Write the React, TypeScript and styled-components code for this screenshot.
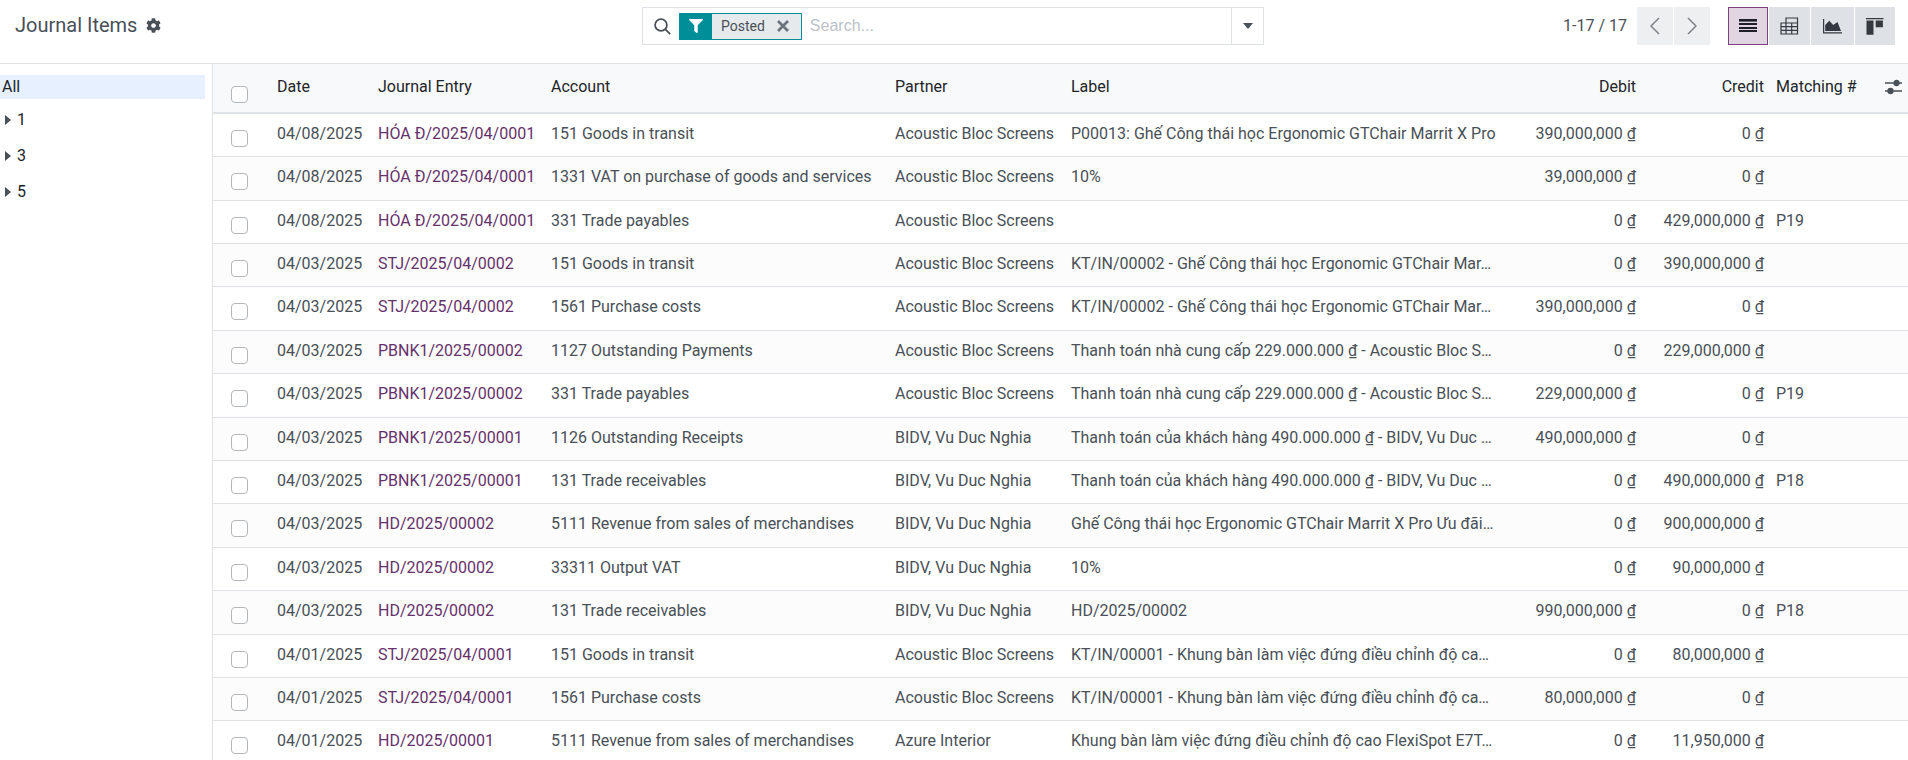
import React from "react";
import styled, { createGlobalStyle } from "styled-components";
import { FaCog, FaFilter } from "react-icons/fa";

const GlobalStyle = createGlobalStyle`
  * { box-sizing: border-box; }
  body {
    margin: 0;
    background: #fff;
    color: #495057;
    font-family: Roboto, "Noto Sans", sans-serif;
    font-size: 16px;
    line-height: 24px;
  }
  button, input { font: inherit; color: inherit; }
  svg { display: block; flex: none; }
`;

const Page = styled.div`
  display: flex;
  flex-direction: column;
  height: 100vh;
  overflow: hidden;
`;

const ControlPanel = styled.header`
  display: grid;
  grid-template-columns: 1fr minmax(320px, 622px) 1fr;
  align-items: start;
  gap: 16px;
  padding: 7px 13px 18px 11px;
  border-bottom: 1px solid #dee2e6;
`;

const Breadcrumb = styled.div`
  display: flex;
  align-items: center;
  gap: 9px;
  height: 36px;
  padding-left: 4px;
`;

const Title = styled.h1`
  margin: 0;
  font-size: 20px;
  font-weight: 400;
`;

const IconButton = styled.button`
  display: inline-flex;
  align-items: center;
  justify-content: center;
  padding: 0;
  border: 0;
  background: none;
  cursor: pointer;
`;

const SearchBar = styled.div`
  display: flex;
  align-items: stretch;
  height: 38px;
  border: 1px solid #dee2e6;
`;

const SearchBody = styled.div`
  display: flex;
  flex: 1;
  align-items: center;
  gap: 8px;
  min-width: 0;
  padding: 0 11px;
`;

const Facet = styled.div`
  display: flex;
  align-items: stretch;
  height: 27px;
  border: 1px solid #008f99;
  background: #e7eaed;
  font-size: 14px;
`;

const FacetIcon = styled.span`
  display: flex;
  align-items: center;
  justify-content: center;
  width: 32px;
  background: #008f99;
  color: #fff;
`;

const FacetLabel = styled.span`
  display: flex;
  align-items: center;
  gap: 12px;
  padding: 0 12px 0 9px;
`;

const SearchInput = styled.input`
  flex: 1;
  min-width: 0;
  padding: 0;
  border: 0;
  outline: 0;
  background: none;
  font-family: "Liberation Sans", sans-serif;
  &::placeholder { color: #bcc3ca; opacity: 1; }
`;

const SearchToggle = styled(IconButton)`
  width: 32px;
  border-left: 1px solid #dee2e6;
`;

const Navigation = styled.div`
  display: flex;
  align-items: center;
  justify-content: flex-end;
`;

const Range = styled.span`
  margin-right: 10px;
`;

const ButtonGroup = styled.div`
  display: flex;
  gap: 1px;
  & + & { margin-left: 18px; }
`;

const PagerButton = styled(IconButton)`
  width: 36px;
  height: 38px;
  background: #eeeff1;
  color: #7c8186;
`;

const ViewButton = styled(IconButton)<{ $active?: boolean }>`
  height: 38px;
  padding: 0 10px;
  border: 1px solid ${(p) => (p.$active ? "#7c3f7c" : "#dee2e6")};
  background: ${(p) => (p.$active ? "#e2d5e2" : "#dee2e6")};
  color: ${(p) => (p.$active ? "#1d1f24" : "#343a40")};
`;

const Content = styled.div`
  display: flex;
  flex: 1;
  min-height: 0;
`;

const Sidebar = styled.nav`
  flex: 0 0 213px;
  padding: 11px 7px 0 0;
  border-right: 1px solid #dee2e6;
  color: #212529;
`;

const CategoryList = styled.ul`
  margin: 0;
  padding: 0;
  list-style: none;
`;

const Category = styled.button<{ $active?: boolean }>`
  display: flex;
  align-items: center;
  gap: 6px;
  width: 100%;
  height: ${(p) => (p.$active ? "24px" : "36px")};
  margin-bottom: ${(p) => (p.$active ? "3px" : "0")};
  padding: 0 0 0 ${(p) => (p.$active ? "2px" : "5px")};
  border: 0;
  background: ${(p) => (p.$active ? "#e6f0ff" : "none")};
  text-align: left;
  cursor: pointer;
`;

const TableScroll = styled.main`
  flex: 1;
  min-width: 0;
  overflow: auto;
  scrollbar-width: none;
`;

const Table = styled.table`
  width: 100%;
  min-width: 1400px;
  table-layout: fixed;
  border-collapse: separate;
  border-spacing: 0;
`;

const Column = styled.col<{ $width?: number }>`
  width: ${(p) => (p.$width ? `${p.$width}px` : "auto")};
`;

const HeadCell = styled.th<{ $end?: boolean }>`
  height: 50px;
  padding: 11px 6px 0;
  border-bottom: 2px solid #dee2e6;
  background: #f8f9fa;
  color: #212529;
  font-weight: 400;
  text-align: ${(p) => (p.$end ? "right" : "left")};
  vertical-align: top;
  white-space: nowrap;
  &:first-child, &:last-child { padding-top: 14px; }
`;

const Row = styled.tr`
  height: 43px;
  &:nth-child(5n), &:nth-child(5n + 2) { height: 44px; }
  &:nth-child(even) { background: #fcfcfc; }
`;

const Cell = styled.td<{ $end?: boolean }>`
  padding: 8px 6px 0;
  border-bottom: 1px solid #dee2e6;
  overflow: hidden;
  text-align: ${(p) => (p.$end ? "right" : "left")};
  text-overflow: ellipsis;
  vertical-align: top;
  white-space: nowrap;
`;

const EntryLink = styled.a`
  color: #66316b;
  text-decoration: none;
`;

const Checkbox = styled.input`
  display: block;
  appearance: none;
  width: 17px;
  height: 17px;
  margin: 8px 0 0 12px;
  border: 1px solid #b4b7ba;
  border-radius: 4px;
  background: #fff;
  &:checked { background: #714b67; }
`;

type Item = [string, string, string, string, string, string, string, string];

const ABS = "Acoustic Bloc Screens";
const BIDV = "BIDV, Vu Duc Nghia";
const CHAIR = "KT/IN/00002 - Ghế Công thái học Ergonomic GTChair Mar…";
const SUPPLIER = "Thanh toán nhà cung cấp 229.000.000 ₫ - Acoustic Bloc S…";
const CUSTOMER = "Thanh toán của khách hàng 490.000.000 ₫ - BIDV, Vu Duc …";
const DESK = "KT/IN/00001 - Khung bàn làm việc đứng điều chỉnh độ ca…";

const items: Item[] = [
  ["04/08/2025", "HÓA Đ/2025/04/0001", "151 Goods in transit", ABS, "P00013: Ghế Công thái học Ergonomic GTChair Marrit X Pro", "390,000,000", "0", ""],
  ["04/08/2025", "HÓA Đ/2025/04/0001", "1331 VAT on purchase of goods and services", ABS, "10%", "39,000,000", "0", ""],
  ["04/08/2025", "HÓA Đ/2025/04/0001", "331 Trade payables", ABS, "", "0", "429,000,000", "P19"],
  ["04/03/2025", "STJ/2025/04/0002", "151 Goods in transit", ABS, CHAIR, "0", "390,000,000", ""],
  ["04/03/2025", "STJ/2025/04/0002", "1561 Purchase costs", ABS, CHAIR, "390,000,000", "0", ""],
  ["04/03/2025", "PBNK1/2025/00002", "1127 Outstanding Payments", ABS, SUPPLIER, "0", "229,000,000", ""],
  ["04/03/2025", "PBNK1/2025/00002", "331 Trade payables", ABS, SUPPLIER, "229,000,000", "0", "P19"],
  ["04/03/2025", "PBNK1/2025/00001", "1126 Outstanding Receipts", BIDV, CUSTOMER, "490,000,000", "0", ""],
  ["04/03/2025", "PBNK1/2025/00001", "131 Trade receivables", BIDV, CUSTOMER, "0", "490,000,000", "P18"],
  ["04/03/2025", "HD/2025/00002", "5111 Revenue from sales of merchandises", BIDV, "Ghế Công thái học Ergonomic GTChair Marrit X Pro Ưu đãi…", "0", "900,000,000", ""],
  ["04/03/2025", "HD/2025/00002", "33311 Output VAT", BIDV, "10%", "0", "90,000,000", ""],
  ["04/03/2025", "HD/2025/00002", "131 Trade receivables", BIDV, "HD/2025/00002", "990,000,000", "0", "P18"],
  ["04/01/2025", "STJ/2025/04/0001", "151 Goods in transit", ABS, DESK, "0", "80,000,000", ""],
  ["04/01/2025", "STJ/2025/04/0001", "1561 Purchase costs", ABS, DESK, "80,000,000", "0", ""],
  ["04/01/2025", "HD/2025/00001", "5111 Revenue from sales of merchandises", "Azure Interior", "Khung bàn làm việc đứng điều chỉnh độ cao FlexiSpot E7T…", "0", "11,950,000", ""],
];

const SearchIcon = () => (
  <svg width="17" height="17" viewBox="0 0 17 17" fill="none" stroke="#495057" strokeWidth="1.8">
    <circle cx="7" cy="7" r="5.900" />
    <path d="M11.200 11.200l5 5" />
  </svg>
);

const CloseIcon = () => (
  <svg width="12" height="12" viewBox="0 0 12 12" stroke="#6c757d" strokeWidth="2.800">
    <path d="M1 1l10 10M11 1L1 11" />
  </svg>
);

const CaretDown = () => (
  <svg width="10" height="6" viewBox="0 0 10 6" fill="#495057">
    <path d="M0 0h10L5 6z" />
  </svg>
);

const CaretRight = () => (
  <svg width="6" height="10" viewBox="0 0 6 10" fill="#495057">
    <path d="M0 0l6 5-6 5z" />
  </svg>
);

const Chevron = ({ d }: { d: string }) => (
  <svg width="10" height="18" viewBox="0 0 10 18" fill="none" stroke="currentColor" strokeWidth="1.500">
    <path d={d} />
  </svg>
);

const ListIcon = () => (
  <svg width="18" height="14" viewBox="0 0 18 14" fill="currentColor">
    <path d="M0 0h18v2H0zM0 4h18v2H0zM0 8h18v2H0zM0 11h18v2H0z" />
    <path d="M0 2h18v1H0z" opacity=".6" />
  </svg>
);

const PivotIcon = () => (
  <svg width="19" height="18" viewBox="0 0 19 18" fill="none" stroke="currentColor" strokeWidth="1.200">
    <path d="M6 6V1h11.500v16H1V6h16.500M1 9.700h16.500M1 13.300h16.500M6 6v11M11.700 6v11" />
  </svg>
);

const GraphIcon = () => (
  <svg width="21" height="15" viewBox="0 0 21 15" fill="currentColor">
    <path d="M1 0h1.200v13.200H20v1.300H1z" />
    <path d="M3.200 12V6l4-4.300 4 4.300L15.500 3l3.500 9z" />
  </svg>
);

const KanbanIcon = () => (
  <svg width="18" height="17" viewBox="0 0 18 17" fill="currentColor">
    <path d="M0 0h17.500v1.300H0zM.500 2.500h7V16.800h-7zM9.700 2.500h7.200V9.300H9.700z" />
  </svg>
);

const SlidersIcon = () => (
  <svg width="17" height="16" viewBox="0 0 17 16" fill="#495057" stroke="#495057" strokeWidth="1.300">
    <path d="M0 4h17M0 12h17" />
    <circle cx="11.500" cy="4" r="2.500" />
    <circle cx="5.500" cy="12" r="2.500" />
  </svg>
);

export default function App() {
  return (
    <>
      <GlobalStyle />
      <Page>
        <ControlPanel>
          <Breadcrumb>
            <Title>Journal Items</Title>
            <IconButton aria-label="Actions"><FaCog size={15} /></IconButton>
          </Breadcrumb>
          <SearchBar role="search">
            <SearchBody>
              <SearchIcon />
              <Facet>
                <FacetIcon><FaFilter size={14} /></FacetIcon>
                <FacetLabel>
                  Posted
                  <IconButton aria-label="Remove filter"><CloseIcon /></IconButton>
                </FacetLabel>
              </Facet>
              <SearchInput aria-label="Search" placeholder="Search..." />
            </SearchBody>
            <SearchToggle aria-label="Search options"><CaretDown /></SearchToggle>
          </SearchBar>
          <Navigation>
            <Range>1-17 / 17</Range>
            <ButtonGroup>
              <PagerButton aria-label="Previous"><Chevron d="M9 1L1 9l8 8" /></PagerButton>
              <PagerButton aria-label="Next"><Chevron d="M1 1l8 8-8 8" /></PagerButton>
            </ButtonGroup>
            <ButtonGroup>
              <ViewButton $active aria-label="List"><ListIcon /></ViewButton>
              <ViewButton aria-label="Pivot"><PivotIcon /></ViewButton>
              <ViewButton aria-label="Graph"><GraphIcon /></ViewButton>
              <ViewButton aria-label="Kanban"><KanbanIcon /></ViewButton>
            </ButtonGroup>
          </Navigation>
        </ControlPanel>
        <Content>
          <Sidebar aria-label="Accounts">
            <CategoryList>
              <li><Category $active>All</Category></li>
              {["1", "3", "5"].map((name) => (
                <li key={name}>
                  <Category><CaretRight />{name}</Category>
                </li>
              ))}
            </CategoryList>
          </Sidebar>
          <TableScroll>
            <Table>
              <colgroup>
                <Column $width={58} />
                <Column $width={101} />
                <Column $width={173} />
                <Column $width={344} />
                <Column $width={176} />
                <Column />
                <Column $width={127} />
                <Column $width={128} />
                <Column $width={103} />
                <Column $width={35} />
              </colgroup>
              <thead>
                <tr>
                  <HeadCell><Checkbox type="checkbox" aria-label="Select all" /></HeadCell>
                  <HeadCell>Date</HeadCell>
                  <HeadCell>Journal Entry</HeadCell>
                  <HeadCell>Account</HeadCell>
                  <HeadCell>Partner</HeadCell>
                  <HeadCell>Label</HeadCell>
                  <HeadCell $end>Debit</HeadCell>
                  <HeadCell $end>Credit</HeadCell>
                  <HeadCell>Matching #</HeadCell>
                  <HeadCell $end><IconButton aria-label="Optional columns"><SlidersIcon /></IconButton></HeadCell>
                </tr>
              </thead>
              <tbody>
                {items.map(([date, entry, account, partner, label, debit, credit, matching], i) => (
                  <Row key={i}>
                    <Cell><Checkbox type="checkbox" aria-label={`Select ${entry}`} /></Cell>
                    <Cell>{date}</Cell>
                    <Cell><EntryLink href="#">{entry}</EntryLink></Cell>
                    <Cell>{account}</Cell>
                    <Cell>{partner}</Cell>
                    <Cell>{label}</Cell>
                    <Cell $end>{debit} ₫</Cell>
                    <Cell $end>{credit} ₫</Cell>
                    <Cell>{matching}</Cell>
                    <Cell />
                  </Row>
                ))}
              </tbody>
            </Table>
          </TableScroll>
        </Content>
      </Page>
    </>
  );
}
